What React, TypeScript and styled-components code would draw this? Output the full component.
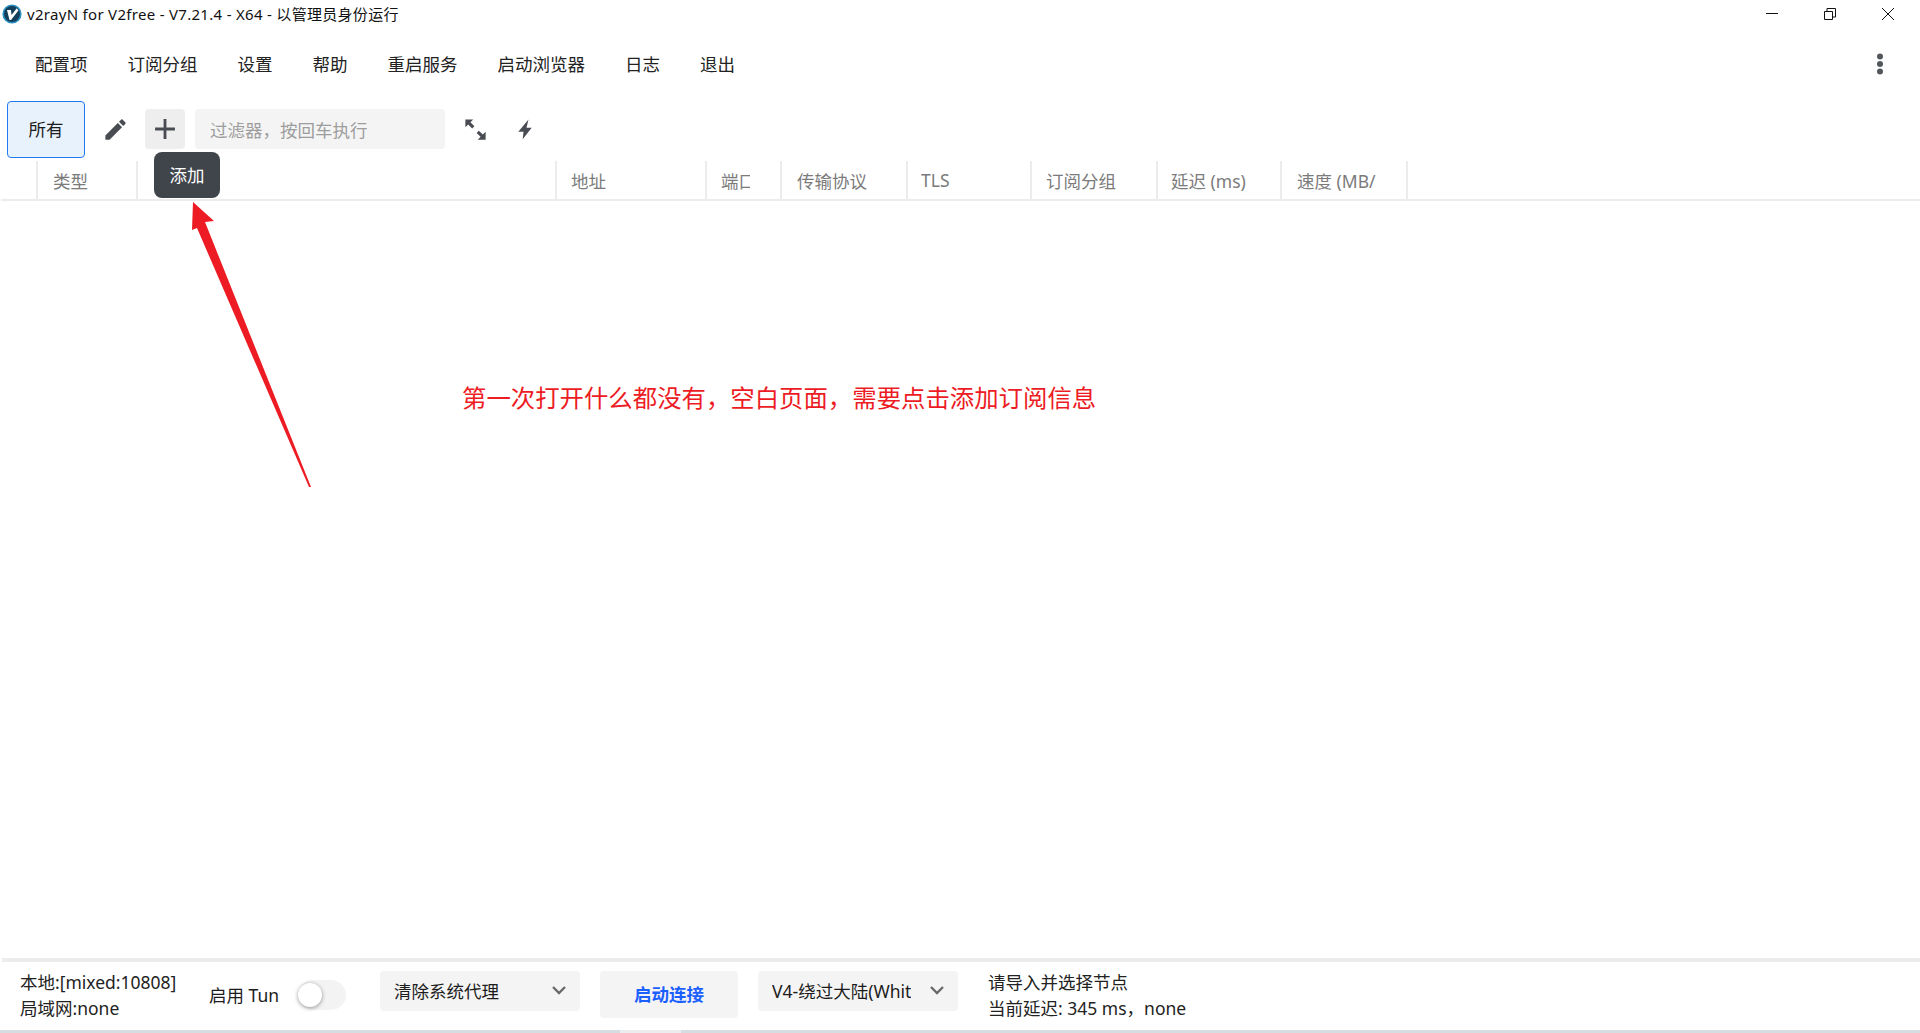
import { createGlobalStyle, styled } from "styled-components";

const GlobalStyle = createGlobalStyle`
  html, body {
    margin: 0;
    padding: 0;
    background: #fff;
  }
  * {
    box-sizing: border-box;
  }
`;

const FONT = `"Noto Sans", "Noto Sans CJK SC", sans-serif`;

const menuItems = ["配置项", "订阅分组", "设置", "帮助", "重启服务", "启动浏览器", "日志", "退出"];

const columns = [
  { label: "", width: 37, pad: 0 },
  { label: "类型", width: 100, pad: 15 },
  { label: "", width: 419, pad: 15 },
  { label: "地址", width: 150, pad: 14 },
  { label: "端口", width: 75, pad: 14 },
  { label: "传输协议", width: 126, pad: 15 },
  { label: "TLS", width: 124, pad: 13 },
  { label: "订阅分组", width: 126, pad: 14 },
  { label: "延迟 (ms)", width: 124, pad: 13 },
  { label: "速度 (MB/s)", width: 126, pad: 15 },
];

function App() {
  return (
    <Page>
      <GlobalStyle />
      <TitleBar>
        <Logo viewBox="0 0 20 20">
          <circle cx="10" cy="10" r="8.8" fill="#123f5c" stroke="#2b8fc2" strokeWidth="1.6" />
          <path d="M5 6 L9 6 L9.5 11 L14.8 4.2 L16.4 6.4 L9 16 L7.5 16 Z" fill="#fff" />
        </Logo>
        <TitleText>v2rayN for V2free - V7.21.4 - X64 - 以管理员身份运行</TitleText>
        <WindowButtons>
          <WindowIcon viewBox="0 0 12 12">
            <path d="M0 5.5H12" stroke="#111" strokeWidth="1" />
          </WindowIcon>
          <WindowIcon viewBox="0 0 12 12">
            <path
              d="M0.5 3.5H8.5V11.5H0.5Z M3 3.5V0.5H11.5V9H8.5"
              stroke="#111"
              strokeWidth="1"
              fill="none"
            />
          </WindowIcon>
          <WindowIcon viewBox="0 0 12 12">
            <path d="M0 0L12 12M12 0L0 12" stroke="#111" strokeWidth="1" />
          </WindowIcon>
        </WindowButtons>
      </TitleBar>

      <MenuBar>
        <MenuList>
          {menuItems.map((item) => (
            <MenuItem key={item}>{item}</MenuItem>
          ))}
        </MenuList>
        <MoreIcon viewBox="0 0 24 24">
          <circle cx="12" cy="4.5" r="3" />
          <circle cx="12" cy="12" r="3" />
          <circle cx="12" cy="19.5" r="3" />
        </MoreIcon>
      </MenuBar>

      <Toolbar>
        <GroupTab>所有</GroupTab>
        <IconButton>
          <ToolIcon $size={27} viewBox="0 0 24 24">
            <path d="M20.71,7.04C21.1,6.65 21.1,6 20.71,5.63L18.37,3.29C18,2.9 17.35,2.9 16.96,3.29L15.12,5.12L18.87,8.87M3,17.25V21H6.75L17.81,9.93L14.06,6.18L3,17.25Z" />
          </ToolIcon>
        </IconButton>
        <IconButton $active>
          <ToolIcon $size={34} viewBox="0 0 24 24">
            <path d="M19,13H13V19H11V13H5V11H11V5H13V11H19V13Z" />
          </ToolIcon>
          <Tooltip>添加</Tooltip>
        </IconButton>
        <FilterInput>过滤器，按回车执行</FilterInput>
        <IconButton>
          <ToolIcon $size={27} viewBox="0 0 24 24">
            <path d="M3 3H10L7.5 5.5L11 9L9 11L5.5 7.5L3 10Z" />
            <path d="M21 21H14L16.5 18.5L13 15L15 13L18.5 16.5L21 14Z" />
          </ToolIcon>
        </IconButton>
        <IconButton>
          <ToolIcon $size={24} viewBox="0 0 24 24">
            <path d="M15.5 2.5L5.3 14.7H10.5L9.7 22.3L18.7 10.7H13.5Z" />
          </ToolIcon>
        </IconButton>
      </Toolbar>

      <HeaderRow>
        {columns.map((col, i) => (
          <HeaderCell key={i} $width={col.width} $pad={col.pad}>
            <HeaderLabel>{col.label}</HeaderLabel>
          </HeaderCell>
        ))}
      </HeaderRow>

      <Content>
        <Arrow viewBox="0 0 130 300">
          <polygon points="3,1 24,20 15,21 121,286 119,286 7,27 2,29" fill="#ed1c24" />
        </Arrow>
        <Annotation>第一次打开什么都没有，空白页面，需要点击添加订阅信息</Annotation>
      </Content>

      <StatusBar>
        <InfoBlock>
          <div>本地:[mixed:10808]</div>
          <div>局域网:none</div>
        </InfoBlock>
        <TunLabel>启用 Tun</TunLabel>
        <Toggle>
          <Knob />
        </Toggle>
        <Select>
          <SelectText>清除系统代理</SelectText>
          <Chevron viewBox="0 0 16 10">
            <path d="M2 2L8 8L14 2" />
          </Chevron>
        </Select>
        <ConnectButton>启动连接</ConnectButton>
        <Select>
          <SelectText>V4-绕过大陆(Whit</SelectText>
          <Chevron viewBox="0 0 16 10">
            <path d="M2 2L8 8L14 2" />
          </Chevron>
        </Select>
        <InfoBlock>
          <div>请导入并选择节点</div>
          <div>当前延迟: 345 ms，none</div>
        </InfoBlock>
      </StatusBar>

      <BottomStrip>
        <StripGap />
      </BottomStrip>
    </Page>
  );
}

const Page = styled.div`
  width: 1920px;
  height: 1033px;
  display: flex;
  flex-direction: column;
  overflow: hidden;
  background: #fff;
  color: #1c1c1c;
  font-family: ${FONT};
  font-size: 17.5px;
`;

const TitleBar = styled.div`
  height: 30px;
  flex: none;
  display: flex;
  align-items: center;
  padding: 0 26px 2px 2px;
`;

const Logo = styled.svg`
  width: 20px;
  height: 20px;
  flex: none;
`;

const TitleText = styled.div`
  margin: 0 0 2px 5px;
  font-size: 15px;
  letter-spacing: 0.3px;
  color: #111;
  white-space: nowrap;
`;

const WindowButtons = styled.div`
  margin-left: auto;
  display: flex;
  gap: 46px;
`;

const WindowIcon = styled.svg`
  width: 12px;
  height: 12px;
  display: block;
`;

const MenuBar = styled.div`
  height: 68px;
  flex: none;
  display: flex;
  align-items: center;
  justify-content: space-between;
  padding: 0 28px 0 35px;
`;

const MenuList = styled.div`
  display: flex;
  gap: 40px;
  padding-bottom: 2px;
`;

const MenuItem = styled.div`
  white-space: nowrap;
  color: #222;
`;

const MoreIcon = styled.svg`
  width: 24px;
  height: 24px;
  fill: #53565c;
`;

const Toolbar = styled.div`
  height: 63px;
  flex: none;
  display: flex;
  align-items: center;
  padding: 0 0 1px 7px;
`;

const GroupTab = styled.div`
  width: 78px;
  height: 57px;
  display: flex;
  align-items: center;
  justify-content: center;
  padding-bottom: 1px;
  background: #e8f2fd;
  border: 1.5px solid #1f7bf2;
  border-radius: 4px;
  margin-right: 10px;
`;

const IconButton = styled.div<{ $active?: boolean }>`
  position: relative;
  width: 40px;
  height: 40px;
  flex: none;
  margin-right: 10px;
  display: flex;
  align-items: center;
  justify-content: center;
  border-radius: 4px;
  background: ${(p) => (p.$active ? "#eeeeee" : "transparent")};
`;

const ToolIcon = styled.svg<{ $size: number }>`
  width: ${(p) => p.$size}px;
  height: ${(p) => p.$size}px;
  flex: none;
  fill: #494c52;
`;

const Tooltip = styled.div`
  position: absolute;
  left: 9px;
  top: 43px;
  width: 66px;
  height: 46px;
  display: flex;
  align-items: center;
  justify-content: center;
  padding-bottom: 1px;
  background: #40444b;
  border-radius: 8px;
  color: #fff;
  z-index: 3;
`;

const FilterInput = styled.div`
  width: 250px;
  height: 40px;
  flex: none;
  margin-right: 10px;
  padding-left: 15px;
  display: flex;
  align-items: center;
  background: #f4f4f4;
  border-radius: 4px;
  color: #9d9d9d;
`;

const HeaderRow = styled.div`
  height: 40px;
  flex: none;
  display: flex;
  margin-left: 1px;
  border-bottom: 2px solid #ececec;
`;

const HeaderCell = styled.div<{ $width: number; $pad: number }>`
  width: ${(p) => p.$width}px;
  flex: none;
  padding: 0 30px 0 ${(p) => p.$pad}px;
  display: flex;
  align-items: center;
  border-right: 2px solid #ececec;
`;

const HeaderLabel = styled.div`
  overflow: hidden;
  white-space: nowrap;
  color: #7b7b7b;
`;

const Content = styled.div`
  position: relative;
  flex: 1;
`;

const Arrow = styled.svg`
  position: absolute;
  left: 190px;
  top: 0;
  width: 130px;
  height: 300px;
`;

const Annotation = styled.div`
  position: absolute;
  left: 462px;
  top: 179px;
  font-size: 24.4px;
  line-height: 36px;
  color: #ed1c24;
  white-space: nowrap;
`;

const StatusBar = styled.div`
  height: 72px;
  flex: none;
  margin-left: 2px;
  border-top: 4px solid #ececec;
  display: flex;
  align-items: flex-start;
  padding: 9px 0 0 18px;
`;

const InfoBlock = styled.div`
  display: flex;
  flex-direction: column;
  gap: 1px;
  margin-top: -1px;
  line-height: 25px;
  width: 189px;
  white-space: nowrap;
  color: #222;
`;

const TunLabel = styled.div`
  line-height: 48px;
  width: 89px;
  white-space: nowrap;
`;

const Toggle = styled.div`
  width: 48px;
  height: 30px;
  margin: 9px 34px 0 0;
  padding-top: 3px;
  flex: none;
  border-radius: 15px;
  background: #f3f3f3;
`;

const Knob = styled.div`
  width: 24px;
  height: 24px;
  border-radius: 50%;
  background: #fff;
  box-shadow: 0 1px 4px rgba(0, 0, 0, 0.4);
`;

const Select = styled.div`
  width: 200px;
  height: 40px;
  flex: none;
  padding: 0 14px 2px;
  display: flex;
  align-items: center;
  justify-content: space-between;
  background: #f4f4f4;
  border-radius: 4px;
  & + button {
    margin-left: 20px;
  }
  & + div {
    margin-left: 30px;
  }
`;

const SelectText = styled.div`
  white-space: nowrap;
  overflow: hidden;
  max-width: 146px;
`;

const Chevron = styled.svg`
  width: 16px;
  height: 10px;
  flex: none;
  margin-right: -1px;
  fill: none;
  stroke: #6a6a6a;
  stroke-width: 2.4px;
`;

const ConnectButton = styled.button`
  width: 138px;
  height: 47px;
  flex: none;
  margin-right: 20px;
  padding: 0 0 2px;
  border: none;
  border-radius: 4px;
  background: #f4f4f4;
  color: #1a5fff;
  font-family: inherit;
  font-size: 17.5px;
  font-weight: 700;
`;

const BottomStrip = styled.div`
  height: 3px;
  flex: none;
  background: #d5dde0;
  padding-left: 620px;
`;

const StripGap = styled.div`
  width: 61px;
  height: 3px;
  background: #ecedee;
`;

export default App;
